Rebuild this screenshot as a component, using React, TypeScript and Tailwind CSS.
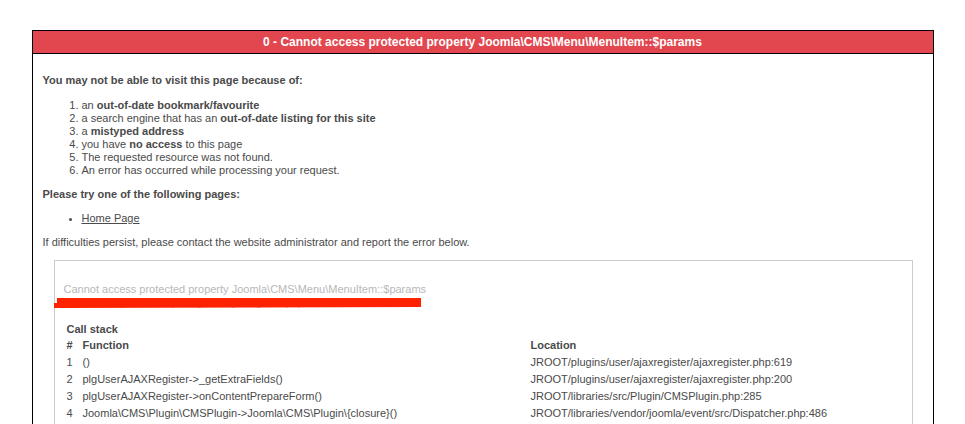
import React from "react";

const rows = [
  ["1", "()", "JROOT/plugins/user/ajaxregister/ajaxregister.php:619"],
  ["2", "plgUserAJAXRegister->_getExtraFields()", "JROOT/plugins/user/ajaxregister/ajaxregister.php:200"],
  ["3", "plgUserAJAXRegister->onContentPrepareForm()", "JROOT/libraries/src/Plugin/CMSPlugin.php:285"],
  ["4", "Joomla\\CMS\\Plugin\\CMSPlugin->Joomla\\CMS\\Plugin\\{closure}()", "JROOT/libraries/vendor/joomla/event/src/Dispatcher.php:486"],
];

export default function App() {
  return (
    <div
      className="min-h-[424px] bg-white pt-[30px] text-[11px] leading-[13px] text-[#4a4a4a]"
      style={{ fontFamily: '"Liberation Sans", Arial, Helvetica, sans-serif' }}
    >
      <div className="mx-auto w-[902px] border border-black">
        <div className="flex h-[23px] items-center justify-center border-b border-black bg-[#e2464e] text-[12px] font-bold text-white">
          0 - Cannot access protected property Joomla\CMS\Menu\MenuItem::$params
        </div>
        <div className="px-[10px] pt-[20px] pb-[20px]">
          <p className="font-bold">You may not be able to visit this page because of:</p>
          <ol className="mt-[12px] list-decimal pl-[39px]">
            <li>
              an <b>out-of-date bookmark/favourite</b>
            </li>
            <li>
              a search engine that has an <b>out-of-date listing for this site</b>
            </li>
            <li>
              a <b>mistyped address</b>
            </li>
            <li>
              you have <b>no access</b> to this page
            </li>
            <li>The requested resource was not found.</li>
            <li>An error has occurred while processing your request.</li>
          </ol>
          <p className="mt-[11px] font-bold">Please try one of the following pages:</p>
          <ul className="mt-[11px] list-disc pl-[39px]">
            <li>
              <a className="underline">Home Page</a>
            </li>
          </ul>
          <p className="mt-[11px]">
            If difficulties persist, please contact the website administrator and report the error below.
          </p>
          <div className="mx-[11px] mt-[11px] mr-[10px] border border-[#cccccc] px-[9px] pt-[22px] pb-[10px]">
            <div className="relative">
              <p className="text-[#b8b8b8]">Cannot access protected property Joomla\CMS\Menu\MenuItem::$params</p>
              <p className="text-[#b8b8b8]">JROOT/plugins/user/ajaxregister/ajaxregister.php:619</p>
              <svg
                className="absolute left-[-10px] top-[15px]"
                width="368"
                height="10"
                viewBox="0 0 368 10"
              >
                <polygon points="3,0 367,0 367,9 0,10 0,5 3,5" fill="#ff2200" />
              </svg>
            </div>
            <table className="mt-[12px] ml-[3px] border-collapse">
              <caption className="text-left font-bold leading-[16px]">Call stack</caption>
              <tbody>
                <tr className="h-[17px] font-bold">
                  <td className="w-[16px] p-0 align-middle">#</td>
                  <td className="w-[448px] p-0 align-middle">Function</td>
                  <td className="p-0 align-middle">Location</td>
                </tr>
                {rows.map((r) => (
                  <tr key={r[0]} className="h-[17px]">
                    <td className="p-0 align-middle">{r[0]}</td>
                    <td className="p-0 align-middle">{r[1]}</td>
                    <td className="p-0 align-middle">{r[2]}</td>
                  </tr>
                ))}
              </tbody>
            </table>
          </div>
        </div>
      </div>
    </div>
  );
}
